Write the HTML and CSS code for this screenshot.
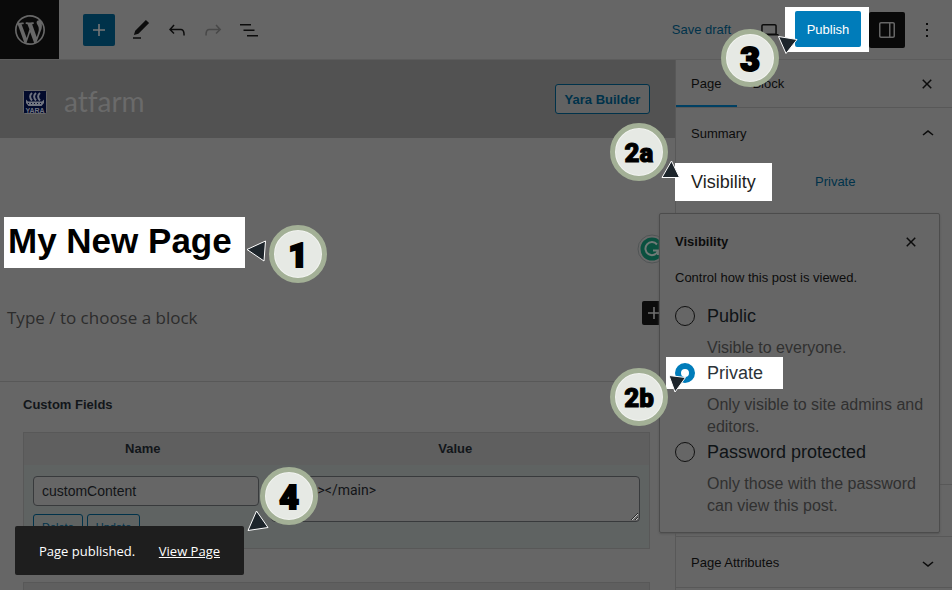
FILE: index.html
```html
<!DOCTYPE html>
<html lang="en">
<head>
<meta charset="utf-8">
<title>Edit Page</title>
<link rel="stylesheet" href="styles.css">
</head>
<body>
<div class="app">
  <header class="topbar">
    <a class="wp-logo" href="#" aria-label="WordPress"><svg width="36" height="36" viewBox="-2 -2 24 24"><path d="M20 10c0-5.51-4.49-10-10-10C4.48 0 0 4.49 0 10c0 5.52 4.48 10 10 10 5.51 0 10-4.48 10-10zM7.78 15.37L4.37 6.22c.55-.02 1.17-.08 1.17-.08.5-.06.44-1.13-.06-1.11 0 0-1.45.11-2.37.11-.18 0-.37 0-.58-.01C4.12 2.69 6.87 1.11 10 1.11c2.33 0 4.45.87 6.05 2.34-.68-.11-1.65.39-1.65 1.58 0 .74.45 1.36.9 2.1.35.61.55 1.36.55 2.46 0 1.49-1.4 5-1.4 5l-3.03-8.37c.54-.02.82-.17.82-.17.5-.05.44-1.25-.06-1.22 0 0-1.44.12-2.38.12-.87 0-2.33-.12-2.33-.12-.5-.03-.56 1.2-.06 1.22l.92.08 1.26 3.41zM17.41 10c.24-.64.74-1.87.43-4.25.7 1.29 1.05 2.71 1.05 4.25 0 3.29-1.73 6.24-4.4 7.78.97-2.59 1.94-5.2 2.92-7.78zM6.1 18.09C3.12 16.65 1.11 13.53 1.11 10c0-1.3.23-2.48.72-3.59C3.25 10.3 4.67 14.2 6.1 18.09zm4.03-6.63l2.58 6.98c-.86.29-1.76.45-2.71.45-.79 0-1.57-.11-2.29-.33.81-2.38 1.62-4.74 2.42-7.1z"/></svg></a>
    <div class="tools">
      <button class="inserter" aria-label="Add block"><svg class="icon" viewBox="0 0 24 24"><path d="M18 11.2h-5.2V6h-1.6v5.2H6v1.6h5.2V18h1.6v-5.2H18z"/></svg></button>
      <button class="icon-button" aria-label="Tools"><svg class="icon" viewBox="0 0 24 24"><path d="M20.1 5.1L16.9 2 6.2 12.7l-1.3 4.4 4.5-1.3L20.1 5.1zM4 20.8h8v-1.5H4v1.5z"/></svg></button>
      <button class="icon-button" aria-label="Undo"><svg class="icon" viewBox="0 0 24 24"><path d="M18.3 11.7c-.6-.6-1.4-.9-2.3-.9H6.7l2.9-3.3-1.1-1-4.5 5L8.5 16l1-1-2.7-2.7H16c.5 0 .9.2 1.3.5 1 1 1 3.4 1 4.5v.3h1.5v-.2c0-1.5 0-4.3-1.5-5.7z"/></svg></button>
      <button class="icon-button icon-button--off" aria-label="Redo"><svg class="icon" viewBox="0 0 24 24"><path d="M15.6 6.5l-1.1 1 2.9 3.3H8c-.9 0-1.7.3-2.3.9-1.4 1.5-1.4 4.2-1.4 5.6v.2h1.5v-.3c0-1.1 0-3.5 1-4.5.3-.3.7-.5 1.3-.5h9.2L14.5 15l1.1 1.1 4.6-4.6-4.6-5z"/></svg></button>
      <button class="icon-button" aria-label="List view"><svg class="icon" viewBox="0 0 24 24"><path d="M3 6h11v1.5H3V6Zm3.5 5.5h11V13h-11v-1.5ZM21 17H10v1.5h11V17Z"/></svg></button>
    </div>
    <div class="actions">
      <button class="save-draft">Save draft</button>
      <button class="preview" aria-label="Preview"><svg class="icon" viewBox="0 0 24 24"><path d="M20.5 16h-.7V8c0-1.1-.9-2-2-2H6.2c-1.1 0-2 .9-2 2v8h-.7c-.8 0-1.5.7-1.5 1.5h20c0-.8-.7-1.5-1.5-1.5zM5.7 8c0-.3.2-.5.5-.5h11.6c.3 0 .5.2.5.5v7.6H5.7V8z"/></svg></button>
      <div class="spotlight spotlight--publish">
        <button class="publish">Publish</button>
        <div class="callout callout--3">3<svg class="pointer" viewBox="0 0 58 58"><path d="M57.500 7.500L76 10.500L65 24.500Z"/></svg></div>
      </div>
      <button class="icon-button icon-button--active" aria-label="Settings"><svg class="icon" viewBox="0 0 24 24"><path d="M18 4H6c-1.1 0-2 .9-2 2v12c0 1.1.9 2 2 2h12c1.1 0 2-.9 2-2V6c0-1.1-.9-2-2-2zm-4 14.500H6c-.3 0-.5-.2-.5-.5V6c0-.3.2-.5.5-.5h8v13zm4.500-.5c0 .3-.2.5-.5.5h-2.500v-13H18c.3 0 .5.2.5.5v12z"/></svg></button>
      <button class="icon-button" aria-label="Options"><svg class="icon" viewBox="0 0 24 24"><path d="M13 19h-2v-2h2v2zm0-6h-2v-2h2v2zm0-6h-2V5h2v2z"/></svg></button>
    </div>
  </header>

  <div class="workspace">
    <main class="canvas">
      <div class="site-header">
        <svg class="yara" width="24" height="24" viewBox="0 0 24 24" role="img" aria-label="Yara">
          <rect class="yara-bg" x=".5" y=".5" width="23" height="23" rx="1"/>
          <path class="yara-sail" d="M9 3C6.500 5 6.500 8 9 10.500M13 3C10.500 5 10.500 8 13 10.500M17 3C14.500 5 14.500 8 17 10.500"/>
          <path class="yara-hull" d="M3 9.500L5 11.500H19L21 9.500V13L18.500 16H5.500L3 13Z"/>
          <path class="yara-oars" d="M5 13.500H19"/>
          <text x="12" y="22.500" text-anchor="middle">YARA</text>
        </svg>
        <span class="brand">atfarm</span>
        <button class="builder">Yara Builder</button>
      </div>
      <section class="editor">
        <div class="title-row">
          <div class="spotlight spotlight--title">
            <h1>My New Page</h1>
            <div class="callout callout--1">1<svg class="pointer" viewBox="0 0 58 58"><path d="M-22 24.500L-3.500 16L-5 36Z"/></svg></div>
          </div>
          <svg class="grammarly" width="30" height="30" viewBox="0 0 30 30" role="img" aria-label="Grammarly"><circle class="g-ring" cx="15" cy="15" r="14"/><circle class="g-disc" cx="15" cy="15" r="11.500"/><path class="g-letter" d="M20 10.500A6.500 6.500 0 1 0 21 17M16 16.500H21V21"/></svg>
        </div>
        <div class="prompt-row">
          <p>Type / to choose a block</p>
          <button class="add-block" aria-label="Add block"><svg class="icon" viewBox="0 0 24 24"><path d="M18 11.200h-5.200V6h-1.600v5.200H6v1.600h5.200V18h1.600v-5.200H18z"/></svg></button>
        </div>
      </section>
      <section class="fields">
        <h2>Custom Fields</h2>
        <table>
          <thead><tr><th class="col-name">Name</th><th>Value</th></tr></thead>
          <tbody><tr>
            <td>
              <input class="key" type="text" value="customContent" aria-label="Name">
              <div class="row-buttons"><button>Delete</button><button>Update</button></div>
            </td>
            <td><textarea aria-label="Value">&gt;&lt;/main&gt;</textarea></td>
          </tr></tbody>
        </table>
        <div class="next-table"></div>
      </section>
    </main>

    <aside class="sidebar">
      <div class="tabs">
        <button class="tab tab--active">Page</button>
        <button class="tab">Block</button>
        <button class="icon-button tabs-close" aria-label="Close settings"><svg class="icon" viewBox="0 0 24 24"><path d="M12 13.060l3.712 3.713 1.061-1.060L13.061 12l3.712-3.712-1.060-1.060L12 10.938 8.288 7.227l-1.061 1.060L10.939 12l-3.712 3.712 1.060 1.061L12 13.061z"/></svg></button>
      </div>
      <section class="panel panel--summary">
        <button class="panel-toggle">Summary<svg class="icon" viewBox="0 0 24 24"><path d="M6.500 12.400L12 8l5.500 4.400-.9 1.200L12 10l-4.500 3.600-1-1.200z"/></svg></button>
        <div class="setting">
          <div class="spotlight spotlight--visibility">Visibility
            <div class="callout callout--2a">2a<svg class="pointer" viewBox="0 0 58 58"><path d="M61.500 38L69.500 54.500H52Z"/></svg></div>
          </div>
          <button class="setting-value">Private</button>
        </div>
      </section>
      <section class="panel panel--closed"></section>
      <section class="panel">
        <button class="panel-toggle">Page Attributes<svg class="icon" viewBox="0 0 24 24"><path d="M17.500 11.600L12 16l-5.500-4.400.9-1.200L12 14l4.500-3.600 1 1.200z"/></svg></button>
      </section>

      <fieldset class="popover" aria-label="Visibility">
        <div class="popover-head">
          <h2>Visibility</h2>
          <button class="icon-button" aria-label="Close"><svg class="icon" viewBox="0 0 24 24"><path d="M12 13.060l3.712 3.713 1.061-1.060L13.061 12l3.712-3.712-1.060-1.060L12 10.938 8.288 7.227l-1.061 1.060L10.939 12l-3.712 3.712 1.060 1.061L12 13.061z"/></svg></button>
        </div>
        <p class="intro">Control how this post is viewed.</p>
        <div class="choice">
          <input type="radio" name="visibility" id="v-public"><label for="v-public">Public</label>
        </div>
        <p class="hint">Visible to everyone.</p>
        <div class="choice spotlight spotlight--private">
          <input type="radio" name="visibility" id="v-private" checked><label for="v-private">Private</label>
          <div class="callout callout--2b">2b<svg class="pointer" viewBox="0 0 58 58"><path d="M59 7.500L75.500 9.500L65 24Z"/></svg></div>
        </div>
        <p class="hint">Only visible to site admins and editors.</p>
        <div class="choice">
          <input type="radio" name="visibility" id="v-password"><label for="v-password">Password protected</label>
        </div>
        <p class="hint">Only those with the password can view this post.</p>
      </fieldset>
    </aside>
  </div>

  <div class="snackbar" role="status">
    <span>Page published.</span>
    <a href="#">View Page</a>
    <div class="callout callout--4">4<svg class="pointer" viewBox="0 0 58 58"><path d="M-3.500 44L8 60.500L-12 63.500Z"/></svg></div>
  </div>
</div>
</body>
</html>
```
FILE: styles.css
```css
:root {
  --surface: #666;
  --line: #585858;
  --ink: #0c0c0c;
  --blue: #00324a;
}

* { box-sizing: border-box; }

body {
  margin: 0;
  background: var(--surface);
  color: var(--ink);
  font: 13px/20px "Liberation Sans", Arial, sans-serif;
}

h1, h2, p { margin: 0; }

button {
  border: 0;
  padding: 0;
  background: none;
  color: inherit;
  font: inherit;
}

.icon {
  display: block;
  width: 24px;
  height: 24px;
  fill: currentColor;
}

.app {
  position: relative;
  display: flex;
  flex-direction: column;
  height: 100vh;
  overflow: hidden;
}

/* Top bar */
.topbar {
  display: flex;
  justify-content: space-between;
  flex: none;
  height: 60px;
  border-bottom: 1px solid #5c5c5c;
}

.wp-logo {
  display: grid;
  place-items: center;
  width: 59px;
  background: #0a0a0a;
  fill: #686868;
}

.tools {
  display: flex;
  align-items: center;
  margin: 0 auto 0 24px;
}

.inserter {
  display: grid;
  place-items: center;
  width: 32px;
  height: 32px;
  margin-right: 8px;
  border-radius: 2px;
  background: var(--blue);
  color: #777;
}

.icon-button {
  display: grid;
  place-items: center;
  flex: none;
  width: 36px;
  height: 36px;
}

.icon-button--off { color: #484848; }

.icon-button--active {
  margin-right: 4px;
  border-radius: 2px;
  background: #090909;
  color: #666;
}

.actions {
  display: flex;
  align-items: center;
  padding-right: 7px;
}

.save-draft {
  margin-right: 22px;
  color: var(--blue);
}

.preview {
  display: grid;
  place-items: center;
  width: 32px;
  height: 36px;
}

.publish {
  width: 66px;
  height: 36px;
  padding-top: 2px;
  border-radius: 2px;
  background: #007cba;
  color: #fff;
}

/* Bright areas that stand out of the dimmed screen */
.spotlight {
  position: relative;
  background: #fff;
}

.spotlight--publish { padding: 4px 8px 5px 10px; }

.spotlight--title {
  padding: 0 13px 4px 4px;
  color: #000;
}

.spotlight--visibility {
  width: 97px;
  padding: 8px 16px;
  color: #1e1e1e;
  font-size: 18px;
  line-height: 22px;
}

/* Numbered markers */
.callout {
  position: absolute;
  z-index: 10;
  display: grid;
  place-items: center;
  width: 58px;
  height: 58px;
  padding-top: 2px;
  border: 5px solid #a3b096;
  border-radius: 50%;
  background: #e6e9e4;
  box-shadow: inset 0 0 0 1px #f1f3ef;
  color: #000;
  font: 900 34px/46px Roboto, sans-serif;
  -webkit-text-stroke: 2px #000;
}

.callout--2a,
.callout--2b {
  font-size: 26px;
  -webkit-text-stroke-width: 1px;
}

.callout--1 { left: 265px; top: 8px; }
.callout--2a { left: -65px; top: -40px; }
.callout--2b { left: -56px; top: 11px; }
.callout--3 { left: -64px; top: 22px; }
.callout--4 { left: 245px; top: -59px; }

.pointer {
  position: absolute;
  left: -5px;
  top: -5px;
  width: 58px;
  height: 58px;
  overflow: visible;
  fill: #1d252b;
  stroke: #fff;
  stroke-width: 1;
}

/* Canvas */
.workspace {
  display: flex;
  flex: 1;
  min-height: 0;
}

.canvas {
  flex: 1;
  min-width: 0;
}

.site-header {
  display: flex;
  align-items: center;
  height: 78px;
  padding: 0 25px 0 23px;
  background: #525252;
}

.yara {
  flex: none;
  margin-top: 5px;
}

.yara-bg { fill: #020a2c; stroke: #666; }
.yara-sail { fill: none; stroke: #707480; stroke-width: 2; }
.yara-hull { fill: #707480; }
.yara-oars { stroke: #020a2c; stroke-width: 1; stroke-dasharray: 1 2; }
.yara text { fill: #707480; font: 700 7px "Liberation Sans", sans-serif; }

.brand {
  margin-left: 17px;
  padding-top: 3px;
  color: #6a6a6a;
  font: 28px/36px Lato, sans-serif;
  font-variant-ligatures: none;
}

.builder {
  width: 95px;
  height: 30px;
  margin-left: auto;
  padding-top: 2px;
  border: 1px solid var(--blue);
  border-radius: 3px;
  background: #626262;
  color: var(--blue);
  font-weight: 700;
}

.editor {
  height: 244px;
  padding-top: 79px;
  border-bottom: 1px solid var(--line);
}

.title-row {
  display: flex;
  align-items: center;
  justify-content: space-between;
  padding: 0 8px 0 4px;
}

h1 {
  font-size: 35px;
  line-height: 47px;
}

.grammarly { margin-top: 12px; }
.g-ring { fill: #696969; stroke: #505455; }
.g-disc { fill: #09503f; }
.g-letter { fill: none; stroke: #707a77; stroke-width: 2; }

.prompt-row {
  display: flex;
  align-items: center;
  justify-content: space-between;
  margin-top: 28px;
  padding: 0 9px 0 7px;
}

.prompt-row p {
  padding-top: 10px;
  color: #2c2c2c;
  font: 17px/24px "Open Sans", sans-serif;
}

.add-block {
  border-radius: 2px;
  background: var(--ink);
  color: #707070;
}

/* Custom fields */
.fields { padding: 13px 25px 0 23px; }

.fields h2 {
  color: #12161a;
  font-size: 13px;
  line-height: 20px;
}

table {
  width: 100%;
  margin-top: 17px;
  border: 1px solid var(--line);
  border-spacing: 0;
  background: #5f6362;
  table-layout: fixed;
}

th {
  height: 32px;
  padding: 0;
  background: #5f5f5f;
  color: #12161a;
}

.col-name { width: 38%; }

td {
  height: 83px;
  padding: 11px 3px 0 9px;
  vertical-align: top;
}

td + td { padding-right: 9px; }

.key,
textarea {
  display: block;
  width: 100%;
  border: 1px solid #383a3c;
  border-radius: 4px;
  background: var(--surface);
  color: #121417;
  font: 14px/20px "Liberation Sans", sans-serif;
}

.key {
  height: 30px;
  padding: 0 8px;
}

textarea {
  height: 46px;
  padding: 3px 8px 3px 46px;
  font-family: Roboto, sans-serif;
}

.row-buttons {
  display: flex;
  gap: 4px;
  margin-top: 8px;
}

.row-buttons button {
  height: 26px;
  padding: 0 8px;
  border: 1px solid var(--blue);
  border-radius: 3px;
  color: var(--blue);
  font-size: 11px;
}

.next-table {
  height: 40px;
  margin-top: 33px;
  border: 1px solid var(--line);
  background: #5f5f5f;
}

/* Settings sidebar */
.sidebar {
  position: relative;
  flex: none;
  width: 277px;
  border-left: 1px solid var(--line);
}

.tabs {
  display: flex;
  align-items: center;
  height: 48px;
  padding-right: 7px;
  border-bottom: 1px solid var(--line);
}

.tab {
  height: 47px;
  padding: 2px 16px 0 15px;
  border-bottom: 2px solid transparent;
}

.tab--active { border-color: #004063; }
.tabs-close { margin-left: auto; }

.panel { border-bottom: 1px solid var(--line); }
.panel--summary { height: 377px; }
.panel--closed { height: 52px; }

.panel-toggle {
  display: flex;
  align-items: center;
  justify-content: space-between;
  width: 100%;
  height: 50px;
  padding: 1px 12px 0 15px;
}

.setting {
  display: flex;
  align-items: center;
  height: 48px;
  margin-left: -1px;
}

.setting-value {
  margin-left: 43px;
  color: var(--blue);
}

/* Visibility popover */
.popover {
  position: absolute;
  top: 153px;
  right: 12px;
  width: 281px;
  min-width: 0;
  margin: 0;
  padding: 10px 15px 17px;
  border: 1px solid #4c4c4c;
  border-radius: 2px;
  background: var(--surface);
  box-shadow: 0 1px 2px #555;
}

.popover-head {
  display: flex;
  align-items: center;
  justify-content: space-between;
  margin-right: -5px;
}

.popover-head h2 {
  font-size: 13px;
  line-height: 20px;
}

.intro { margin: 8px 0 12px; }

.choice {
  display: flex;
  align-items: center;
  gap: 12px;
  height: 32px;
  margin: 0 35px 0 -9px;
  padding-left: 9px;
}

.choice label {
  color: #0f1316;
  font-size: 18px;
  line-height: 22px;
}

.choice.spotlight--private {
  width: 117px;
  margin-right: 0;
}

.choice.spotlight--private label { color: #2c3338; }

.choice input {
  appearance: none;
  flex: none;
  width: 20px;
  height: 20px;
  margin: 0;
  border: 1px solid #111;
  border-radius: 50%;
}

.choice input:checked { border: 6px solid #007cba; }

.hint {
  margin: 5px 0 -2px 32px;
  color: #303030;
  font-size: 16px;
  line-height: 22px;
}

/* Snackbar */
.snackbar {
  position: absolute;
  left: 15px;
  bottom: 15px;
  display: flex;
  justify-content: space-between;
  width: 229px;
  padding: 15px 24px 14px;
  border-radius: 2px;
  background: #1e1e1e;
  color: #fff;
  font: 13px/20px "Open Sans", sans-serif;
}

.snackbar a { color: inherit; }
```
